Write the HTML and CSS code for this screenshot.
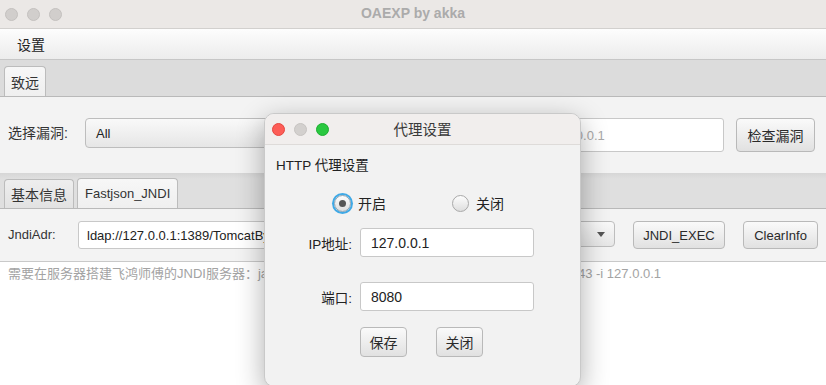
FILE: index.html
```html
<!DOCTYPE html>
<html lang="zh-CN">
<head>
  <meta charset="UTF-8">
  <title>OAEXP by akka</title>
  <link rel="stylesheet" href="styles.css">
</head>
<body>
  <div class="window">
    <div class="titlebar">
      <div class="lights">
        <span class="light"></span>
        <span class="light"></span>
        <span class="light"></span>
      </div>
      <div class="title">OAEXP by akka</div>
    </div>

    <div class="menubar">
      <span class="menu">设置</span>
    </div>

    <div class="tabs top-tabs">
      <div class="tab active">致远</div>
    </div>

    <div class="pane scan-row">
      <label class="label scan-label">选择漏洞:</label>
      <div class="combo vuln-combo">All<span class="arrow"></span></div>
      <input class="field url-field" placeholder="http://127.0.0.1">
      <button class="btn check-btn">检查漏洞</button>
    </div>

    <div class="tabs sub-tabs">
      <div class="tab">基本信息</div>
      <div class="tab active">Fastjson_JNDI</div>
    </div>

    <div class="pane jndi-row">
      <label class="label jndi-label">JndiAdr:</label>
      <input class="field jndi-field" value="ldap://127.0.0.1:1389/TomcatBypass/Command/Base64/">
      <div class="combo cmd-combo"><span class="arrow"></span></div>
      <button class="btn exec-btn">JNDI_EXEC</button>
      <button class="btn clear-btn">ClearInfo</button>
    </div>

    <div class="output">需要在服务器搭建飞鸿师傅的JNDI服务器：java -jar JNDIExploit-1.0.0-SNAPSHOT.jar -l 1389 -p 8443 -i 127.0.0.1</div>
  </div>

  <!-- 代理设置 弹窗 -->
  <div class="dialog">
    <div class="dialog-titlebar">
      <div class="lights">
        <span class="light red"></span>
        <span class="light gray"></span>
        <span class="light green"></span>
      </div>
      <div class="dialog-title">代理设置</div>
    </div>

    <div class="dialog-body">
      <div class="heading">HTTP 代理设置</div>

      <div class="radios">
        <div class="radio-item">
          <span class="radio checked"></span>
          <span>开启</span>
        </div>
        <div class="radio-item">
          <span class="radio"></span>
          <span>关闭</span>
        </div>
      </div>

      <div class="form">
        <label class="form-label">IP地址:</label>
        <input class="field proxy-field" value="127.0.0.1">
        <label class="form-label">端口:</label>
        <input class="field proxy-field" value="8080">
        <div class="actions">
          <button class="btn small-btn">保存</button>
          <button class="btn small-btn">关闭</button>
        </div>
      </div>
    </div>
  </div>
</body>
</html>
```

FILE: styles.css
```css
* {
  box-sizing: border-box;
}

body {
  margin: 0;
  width: 826px;
  height: 385px;
  overflow: hidden;
  background: #ffffff;
  color: #333333;
  font-family: "Liberation Sans", "Noto Sans CJK SC", sans-serif;
  font-size: 13px;
}

.window {
  width: 826px;
  height: 385px;
  display: flex;
  flex-direction: column;
  background: #ffffff;
}

/* title bar */
.titlebar {
  height: 29px;
  flex: none;
  display: flex;
  align-items: center;
  background: #ebe8e6;
  border-bottom: 1px solid #d2d0ce;
  position: relative;
}

.lights {
  display: flex;
  gap: 9px;
  padding-left: 5px;
}

.light {
  width: 13px;
  height: 13px;
  border-radius: 50%;
  background: #d1cecc;
  border: 1px solid #c4c1bf;
}

.title {
  position: absolute;
  left: 0;
  right: 0;
  top: 5px;
  text-align: center;
  font-weight: bold;
  font-size: 14px;
  color: #ababab;
}

/* menu */
.menubar {
  height: 31px;
  flex: none;
  display: flex;
  align-items: center;
  padding-left: 17px;
  background: linear-gradient(#fdfdfd, #ececec);
  border-bottom: 1px solid #c6c6c6;
}

.menu {
  font-size: 14px;
  color: #222;
}

/* tabs */
.tabs {
  flex: none;
  display: flex;
  align-items: flex-end;
  gap: 3px;
  padding-left: 4px;
  background: #dcdcdc;
  border-bottom: 1px solid #b9b9b9;
}

.top-tabs {
  height: 37px;
}

.sub-tabs {
  height: 36px;
  background: linear-gradient(#d6d6d6, #dfdfdf 6px);
}

.tab {
  height: 29px;
  padding: 0 6px;
  display: flex;
  align-items: center;
  font-size: 14px;
  color: #333;
  background: linear-gradient(#eeeeee, #e2e2e2);
  border: 1px solid #bcbcbc;
  border-bottom: none;
  border-radius: 4px 4px 0 0;
}

.tab.active {
  height: 30px;
  background: linear-gradient(#f7f7f7, #efefef);
}

.sub-tabs .tab.active {
  font-size: 13px;
  padding: 0 7px;
}

/* panes */
.pane {
  flex: none;
  display: flex;
  align-items: flex-start;
  background: #f3f3f3;
  padding-left: 8px;
}

.scan-row {
  height: 76px;
  padding-top: 21px;
}

.jndi-row {
  height: 53px;
  padding-top: 12px;
  border-bottom: 1px solid #c9c9c9;
}

.label {
  color: #333;
}

.scan-label {
  width: 77px;
  font-size: 14px;
  line-height: 30px;
}

.jndi-label {
  width: 70px;
  line-height: 28px;
}

.field {
  font: inherit;
  color: #222;
  background: #ffffff;
  border: 1px solid #c8c8c8;
  border-radius: 3px;
  padding: 0 8px;
  outline: none;
}

.field::placeholder {
  color: #a9a9a9;
}

.combo {
  position: relative;
  display: flex;
  align-items: center;
  padding: 0 10px;
  background: linear-gradient(#f9f9f9, #e6e6e6);
  border: 1px solid #bdbdbd;
  border-radius: 4px;
  color: #222;
}

.arrow {
  position: absolute;
  right: 9px;
  top: 50%;
  margin-top: -2px;
  border-left: 4px solid transparent;
  border-right: 4px solid transparent;
  border-top: 5px solid #555;
}

.vuln-combo {
  width: 415px;
  height: 30px;
  margin-right: 9px;
}

.url-field {
  width: 215px;
  height: 34px;
  margin-right: 12px;
}

.btn {
  font: inherit;
  color: #2a2a2a;
  background: linear-gradient(#fafafa, #e1e1e1);
  border: 1px solid #b9b9b9;
  border-radius: 4px;
  padding: 0;
}

.check-btn {
  width: 79px;
  height: 34px;
  font-size: 14px;
}

.jndi-field {
  width: 340px;
  height: 28px;
  margin-right: 10px;
}

.cmd-combo {
  width: 187px;
  height: 26px;
  margin-right: 18px;
}

.exec-btn {
  width: 92px;
  height: 28px;
  margin-right: 18px;
}

.clear-btn {
  width: 75px;
  height: 28px;
}

.output {
  flex: 1;
  background: #ffffff;
  color: #a3a3a3;
  padding: 3px 8px;
  white-space: nowrap;
  line-height: 18px;
}

/* dialog */
.dialog {
  position: absolute;
  left: 264px;
  top: 113px;
  width: 317px;
  height: 274px;
  background: #f2f2f2;
  border-radius: 10px;
  border: 1px solid #c9c9c9;
  box-shadow: 0 8px 28px rgba(0, 0, 0, 0.32);
  overflow: hidden;
}

.dialog-titlebar {
  height: 31px;
  display: flex;
  align-items: center;
  position: relative;
  background: #f1eeed;
  border-bottom: 1px solid #dedbd9;
}

.dialog-titlebar .lights {
  padding-left: 7px;
}

.light.red {
  background: #fd5d57;
  border-color: #e4463f;
}

.light.gray {
  background: #d3d0ce;
  border-color: #c6c3c1;
}

.light.green {
  background: #2ac840;
  border-color: #1eae31;
}

.dialog-title {
  position: absolute;
  left: 0;
  right: 0;
  top: 4px;
  text-align: center;
  font-size: 14.5px;
  color: #3a3a3a;
}

.dialog-body {
  padding: 12px 0 0 11px;
}

.heading {
  font-size: 13.5px;
  line-height: 18px;
  color: #222;
}

.radios {
  display: flex;
  gap: 66px;
  margin: 18px 0 0 58px;
  height: 20px;
  align-items: center;
}

.radio-item {
  display: flex;
  align-items: center;
  gap: 7px;
  font-size: 14px;
  color: #222;
}

.radio {
  width: 17px;
  height: 17px;
  border-radius: 50%;
  background: linear-gradient(#fdfdfd, #dedede);
  border: 1px solid #a9a9a9;
  position: relative;
}

.radio.checked {
  box-shadow: 0 0 0 2px #3fa9e6;
  border-color: #8aa3b5;
}

.radio.checked::after {
  content: "";
  position: absolute;
  left: 4px;
  top: 4px;
  width: 7px;
  height: 7px;
  border-radius: 50%;
  background: #555;
}

.form {
  display: grid;
  grid-template-columns: 76px 174px;
  column-gap: 8px;
  row-gap: 25px;
  align-items: center;
  margin-top: 15px;
}

.form-label {
  text-align: right;
  font-size: 13.5px;
  color: #222;
}

.proxy-field {
  height: 29px;
  font-size: 14px;
  padding: 0 10px;
}

.actions {
  grid-column: 2;
  display: flex;
  gap: 29px;
  margin-top: -9px;
}

.small-btn {
  width: 47px;
  height: 30px;
  font-size: 14px;
}
```
